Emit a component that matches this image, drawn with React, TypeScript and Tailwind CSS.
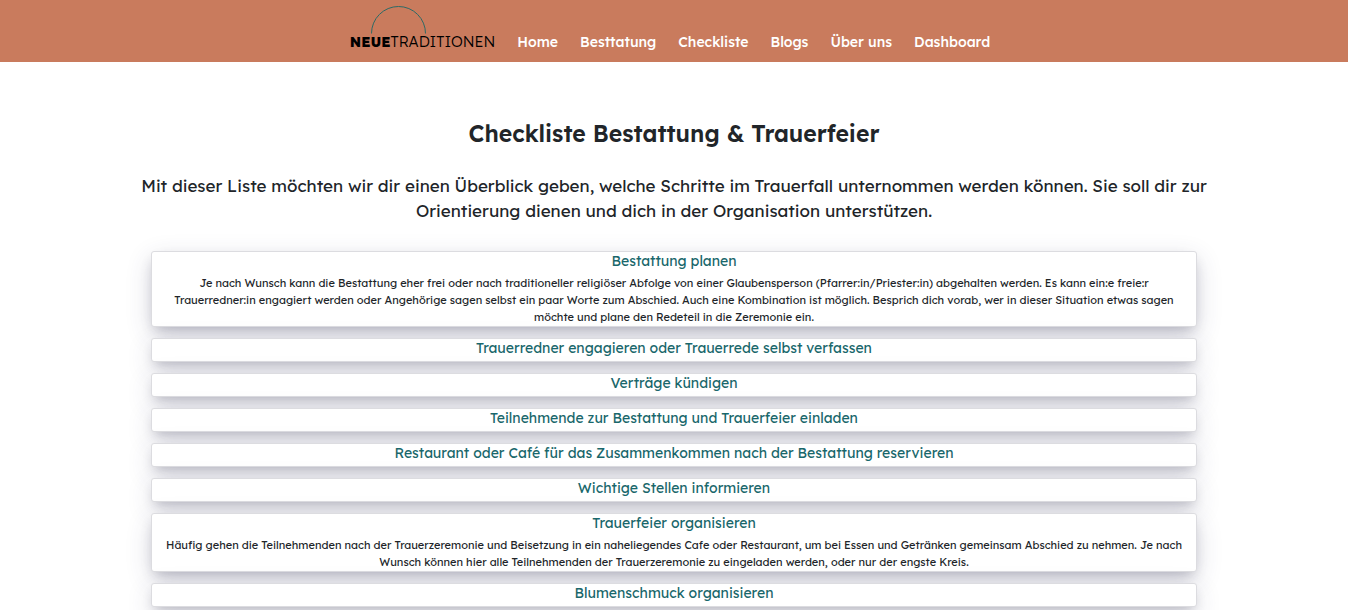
const navItems = ["Home", "Besttatung", "Checkliste", "Blogs", "Über uns", "Dashboard"];

type Entry = { title: string; text?: string };

const entries: Entry[] = [
  {
    title: "Bestattung planen",
    text: "Je nach Wunsch kann die Bestattung eher frei oder nach traditioneller religiöser Abfolge von einer Glaubensperson (Pfarrer:in/Priester:in) abgehalten werden. Es kann ein:e freie:r Trauerredner:in engagiert werden oder Angehörige sagen selbst ein paar Worte zum Abschied. Auch eine Kombination ist möglich. Besprich dich vorab, wer in dieser Situation etwas sagen möchte und plane den Redeteil in die Zeremonie ein.",
  },
  { title: "Trauerredner engagieren oder Trauerrede selbst verfassen" },
  { title: "Verträge kündigen" },
  { title: "Teilnehmende zur Bestattung und Trauerfeier einladen" },
  { title: "Restaurant oder Café für das Zusammenkommen nach der Bestattung reservieren" },
  { title: "Wichtige Stellen informieren" },
  {
    title: "Trauerfeier organisieren",
    text: "Häufig gehen die Teilnehmenden nach der Trauerzeremonie und Beisetzung in ein naheliegendes Cafe oder Restaurant, um bei Essen und Getränken gemeinsam Abschied zu nehmen. Je nach Wunsch können hier alle Teilnehmenden der Trauerzeremonie zu eingeladen werden, oder nur der engste Kreis.",
  },
  { title: "Blumenschmuck organisieren" },
];

function Logo() {
  return (
    <a href="#" className="flex flex-col text-black">
      <svg viewBox="0 0 56 28" className="ml-5 h-7 w-14" fill="none" aria-hidden="true">
        <path d="M1.5 27.5a27 27 0 0 1 54 0" stroke="#2c6a66" strokeWidth="1" />
      </svg>
      <span className="text-[15px] leading-4 font-light">
        <b className="text-[14px] font-extrabold">NEUE</b>TRADITIONEN
      </span>
    </a>
  );
}

function Header() {
  return (
    <header className="flex justify-center bg-[#c97b5d] pt-1.5 pr-2 pb-3">
      <nav className="flex items-end gap-[22px]">
        <Logo />
        <ul className="flex gap-[22px]">
          {navItems.map((item) => (
            <li key={item}>
              <a href="#" className="block text-[14px] leading-4 font-medium text-white">
                {item}
              </a>
            </li>
          ))}
        </ul>
      </nav>
    </header>
  );
}

function Card({ title, text }: Entry) {
  return (
    <li className="rounded-[3px] border border-[#dcdce0] bg-white px-1.5 shadow-[0_8px_27px_-1px_rgba(50,50,93,0.2),0_6px_12px_-4px_rgba(30,30,50,0.25)]">
      <h2 className="pb-1 text-[14px] leading-[18px] text-[#19676b]">{title}</h2>
      {text && <p className="pt-px text-[11px] leading-[17px]">{text}</p>}
    </li>
  );
}

export default function App() {
  return (
    <div className="h-screen overflow-hidden bg-white font-['Lexend',sans-serif] text-[#212529]">
      <Header />
      <main className="px-[137px] pt-14 text-center">
        <h1 className="text-[23px] leading-8 font-semibold">Checkliste Bestattung &amp; Trauerfeier</h1>
        <p className="mt-[23px] text-[17px] leading-[25px]">
          Mit dieser Liste möchten wir dir einen Überblick geben, welche Schritte im Trauerfall unternommen werden können. Sie soll dir zur Orientierung dienen und dich in der Organisation unterstützen.
        </p>
        <ul className="mt-7 flex flex-col gap-[11px] px-3.5">
          {entries.map((entry) => (
            <Card key={entry.title} {...entry} />
          ))}
        </ul>
      </main>
    </div>
  );
}
